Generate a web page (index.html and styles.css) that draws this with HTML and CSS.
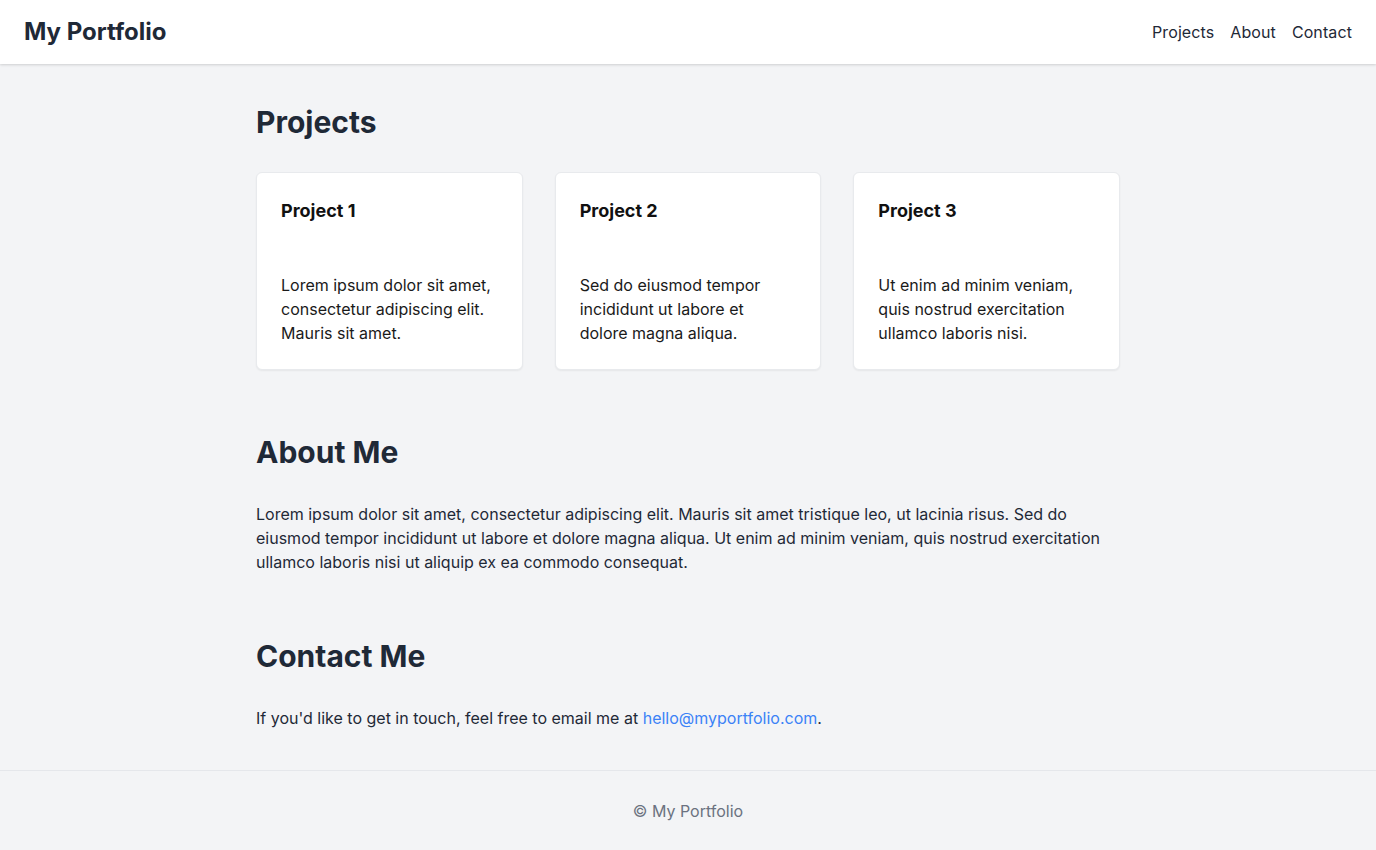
FILE: index.html
```html
<!DOCTYPE html>
<html lang="en">
<head>
<meta charset="utf-8">
<title>My Portfolio</title>
<link rel="stylesheet" href="styles.css">
</head>
<body>
<header class="site-header">
  <div class="logo">My Portfolio</div>
  <nav class="nav">
    <a href="#projects">Projects</a>
    <a href="#about">About</a>
    <a href="#contact">Contact</a>
  </nav>
</header>
<main class="main">
  <section class="section" id="projects">
    <h2 class="section-title">Projects</h2>
    <div class="cards">
      <div class="card">
        <h3 class="card-title">Project 1</h3>
        <p class="card-text">Lorem ipsum dolor sit amet, consectetur adipiscing elit. Mauris sit amet.</p>
      </div>
      <div class="card">
        <h3 class="card-title">Project 2</h3>
        <p class="card-text">Sed do eiusmod tempor incididunt ut labore et dolore magna aliqua.</p>
      </div>
      <div class="card">
        <h3 class="card-title">Project 3</h3>
        <p class="card-text">Ut enim ad minim veniam, quis nostrud exercitation ullamco laboris nisi.</p>
      </div>
    </div>
  </section>
  <section class="section" id="about">
    <h2 class="section-title">About Me</h2>
    <p class="text">Lorem ipsum dolor sit amet, consectetur adipiscing elit. Mauris sit amet tristique leo, ut lacinia risus. Sed do eiusmod tempor incididunt ut labore et dolore magna aliqua. Ut enim ad minim veniam, quis nostrud exercitation ullamco laboris nisi ut aliquip ex ea commodo consequat.</p>
  </section>
  <section class="section" id="contact">
    <h2 class="section-title">Contact Me</h2>
    <p class="text">If you'd like to get in touch, feel free to email me at <a class="link" href="mailto:hello@myportfolio.com">hello@myportfolio.com</a>.</p>
  </section>
</main>
<footer class="footer">© My Portfolio</footer>
</body>
</html>
```

FILE: styles.css
```css
* { box-sizing: border-box; }
html, body { margin: 0; padding: 0; }
body {
  font-family: Inter, "Noto Sans", sans-serif;
  background: #f3f4f6;
  color: #1f2937;
  font-size: 16px;
  line-height: 24px;
}
.site-header {
  height: 64px;
  background: #fff;
  display: flex;
  align-items: center;
  justify-content: space-between;
  padding: 0 24px;
  box-shadow: 0 1px 3px rgba(0,0,0,0.1), 0 1px 2px rgba(0,0,0,0.06);
  position: relative;
}
.logo {
  font-size: 24px;
  line-height: 32px;
  font-weight: 700;
  color: #1f2937;
}
.nav { display: flex; gap: 16px; }
.nav a { color: #1f2937; text-decoration: none; font-size: 16px; letter-spacing: 0.1px; }
.main {
  max-width: 896px;
  margin: 0 auto;
  padding: 40px 16px 40px;
}
.section + .section { margin-top: 64px; }
.section-title {
  margin: 0 0 32px;
  font-size: 30px;
  line-height: 36px;
  font-weight: 700;
  color: #1f2937;
}
.cards {
  display: grid;
  grid-template-columns: repeat(3, 1fr);
  gap: 32px;
}
.card {
  background: #fff;
  border-radius: 6px;
  padding: 24px 28px 24px 24px;
  box-shadow: 0 1px 2px rgba(0,0,0,0.06);
  border: 1px solid #e8eaed;
}
.card-title {
  margin: 0 0 48px;
  font-size: 18px;
  line-height: 28px;
  font-weight: 700;
  color: #111;
}
.card-text { margin: 0; color: #1a1a1a; }
.text { margin: 0; color: #1f2937; }
.link { color: #3b82f6; text-decoration: none; }
.footer {
  border-top: 1px solid #e5e7eb;
  text-align: center;
  color: #6b7280;
  padding: 28px 0 28px;
}
```
